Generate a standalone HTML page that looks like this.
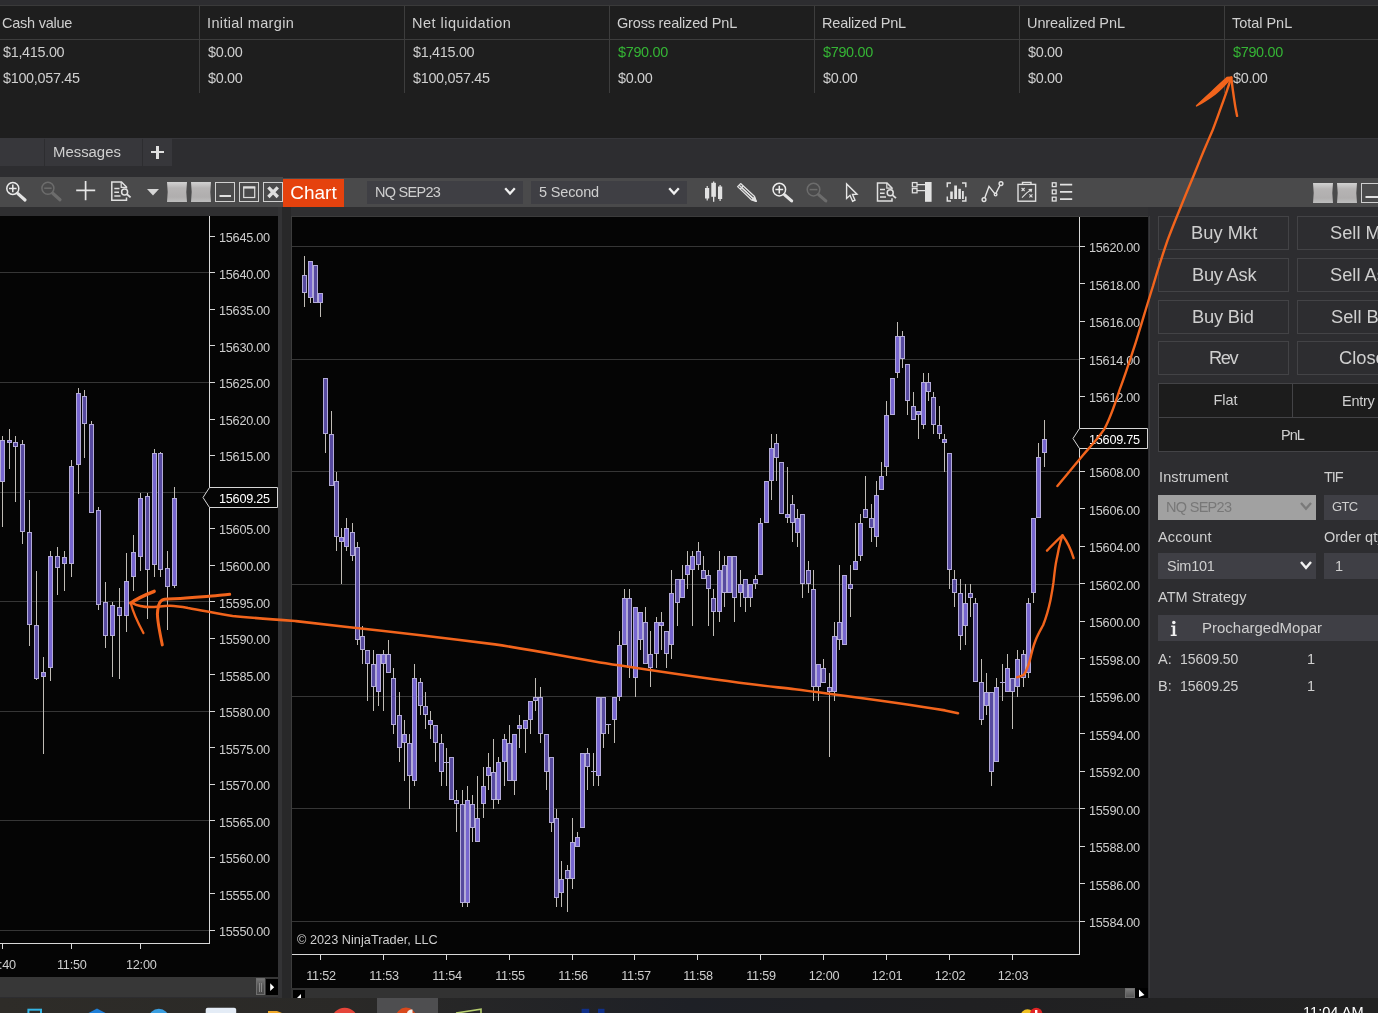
<!DOCTYPE html>
<html><head><meta charset="utf-8"><title>NinjaTrader</title>
<style>
html,body{margin:0;padding:0;background:#2d2d30;}
body{width:1378px;height:1013px;overflow:hidden;position:relative;font-family:"Liberation Sans",sans-serif;}
#root{position:absolute;left:0;top:0;width:1378px;height:1013px;overflow:hidden;}
#root div,#root svg{position:absolute;}
#root div.t{will-change:transform;}
</style></head><body><div id="root">
<div style="left:0px;top:0px;width:1378px;height:1013px;background:#2d2d30;"></div>
<div style="left:0px;top:0px;width:1378px;height:5px;background:#2d2d30;"></div>
<div style="left:0px;top:5px;width:1378px;height:133px;background:#1e1e1e;"></div>
<div style="left:0px;top:5px;width:1378px;height:1px;background:#3a3a3a;"></div>
<div style="left:0px;top:39px;width:1378px;height:1px;background:#3d3d3d;"></div>
<div style="left:199px;top:6px;width:1px;height:87px;background:#3d3d3d;"></div>
<div style="left:404px;top:6px;width:1px;height:87px;background:#3d3d3d;"></div>
<div style="left:609px;top:6px;width:1px;height:87px;background:#3d3d3d;"></div>
<div style="left:814px;top:6px;width:1px;height:87px;background:#3d3d3d;"></div>
<div style="left:1019px;top:6px;width:1px;height:87px;background:#3d3d3d;"></div>
<div style="left:1224px;top:6px;width:1px;height:87px;background:#3d3d3d;"></div>
<div class="t" style="left:2px;top:10.8px;height:24px;line-height:24px;font-size:14.5px;color:#cfcfcf;white-space:nowrap;letter-spacing:-0.25px;">Cash value</div>
<div class="t" style="left:207px;top:10.8px;height:24px;line-height:24px;font-size:14.5px;color:#cfcfcf;white-space:nowrap;letter-spacing:0.36px;">Initial margin</div>
<div class="t" style="left:412px;top:10.8px;height:24px;line-height:24px;font-size:14.5px;color:#cfcfcf;white-space:nowrap;letter-spacing:0.5px;">Net liquidation</div>
<div class="t" style="left:617px;top:10.8px;height:24px;line-height:24px;font-size:14.5px;color:#cfcfcf;white-space:nowrap;letter-spacing:-0.18px;">Gross realized PnL</div>
<div class="t" style="left:822px;top:10.8px;height:24px;line-height:24px;font-size:14.5px;color:#cfcfcf;white-space:nowrap;letter-spacing:-0.19px;">Realized PnL</div>
<div class="t" style="left:1027px;top:10.8px;height:24px;line-height:24px;font-size:14.5px;color:#cfcfcf;white-space:nowrap;letter-spacing:-0.09px;">Unrealized PnL</div>
<div class="t" style="left:1232px;top:10.8px;height:24px;line-height:24px;font-size:14.5px;color:#cfcfcf;white-space:nowrap;letter-spacing:-0.03px;">Total PnL</div>
<div class="t" style="left:3px;top:40.3px;height:24px;line-height:24px;font-size:14.4px;color:#cfcfcf;white-space:nowrap;letter-spacing:-0.3px;">$1,415.00</div>
<div class="t" style="left:208px;top:40.3px;height:24px;line-height:24px;font-size:14.4px;color:#cfcfcf;white-space:nowrap;letter-spacing:-0.3px;">$0.00</div>
<div class="t" style="left:413px;top:40.3px;height:24px;line-height:24px;font-size:14.4px;color:#cfcfcf;white-space:nowrap;letter-spacing:-0.3px;">$1,415.00</div>
<div class="t" style="left:618px;top:40.3px;height:24px;line-height:24px;font-size:14.4px;color:#35b535;white-space:nowrap;letter-spacing:-0.3px;">$790.00</div>
<div class="t" style="left:823px;top:40.3px;height:24px;line-height:24px;font-size:14.4px;color:#35b535;white-space:nowrap;letter-spacing:-0.3px;">$790.00</div>
<div class="t" style="left:1028px;top:40.3px;height:24px;line-height:24px;font-size:14.4px;color:#cfcfcf;white-space:nowrap;letter-spacing:-0.3px;">$0.00</div>
<div class="t" style="left:1233px;top:40.3px;height:24px;line-height:24px;font-size:14.4px;color:#35b535;white-space:nowrap;letter-spacing:-0.3px;">$790.00</div>
<div class="t" style="left:3px;top:66.3px;height:24px;line-height:24px;font-size:14.4px;color:#cfcfcf;white-space:nowrap;letter-spacing:-0.3px;">$100,057.45</div>
<div class="t" style="left:208px;top:66.3px;height:24px;line-height:24px;font-size:14.4px;color:#cfcfcf;white-space:nowrap;letter-spacing:-0.3px;">$0.00</div>
<div class="t" style="left:413px;top:66.3px;height:24px;line-height:24px;font-size:14.4px;color:#cfcfcf;white-space:nowrap;letter-spacing:-0.3px;">$100,057.45</div>
<div class="t" style="left:618px;top:66.3px;height:24px;line-height:24px;font-size:14.4px;color:#cfcfcf;white-space:nowrap;letter-spacing:-0.3px;">$0.00</div>
<div class="t" style="left:823px;top:66.3px;height:24px;line-height:24px;font-size:14.4px;color:#cfcfcf;white-space:nowrap;letter-spacing:-0.3px;">$0.00</div>
<div class="t" style="left:1028px;top:66.3px;height:24px;line-height:24px;font-size:14.4px;color:#cfcfcf;white-space:nowrap;letter-spacing:-0.3px;">$0.00</div>
<div class="t" style="left:1233px;top:66.3px;height:24px;line-height:24px;font-size:14.4px;color:#cfcfcf;white-space:nowrap;letter-spacing:-0.3px;">$0.00</div>
<div style="left:0px;top:138px;width:1378px;height:40px;background:#2d2d30;"></div>
<div style="left:0px;top:138px;width:1378px;height:1px;background:#36363a;"></div>
<div style="left:0px;top:138px;width:44px;height:28px;background:#37373b;"></div>
<div style="left:45px;top:138px;width:97px;height:28px;background:#37373b;"></div>
<div style="left:143px;top:138px;width:29px;height:28px;background:#37373b;"></div>
<div class="t" style="left:53px;top:139.5px;height:24px;line-height:24px;font-size:14.9px;color:#cfcfcf;white-space:nowrap;">Messages</div>
<div style="left:151px;top:151px;width:13px;height:2.4px;background:#e0e0e0;"></div>
<div style="left:156.3px;top:145.7px;width:2.4px;height:13px;background:#e0e0e0;"></div>
<div style="left:0px;top:177px;width:283px;height:30px;background:#4a4a4b;"></div>
<div style="left:283px;top:178px;width:1095px;height:29.4px;background:#4a4a4b;"></div>
<div style="left:0px;top:207px;width:1378px;height:10px;background:#2f2f31;"></div>
<div style="left:283px;top:179px;width:61px;height:28px;background:#e5420e;"></div>
<div class="t" style="left:283px;top:181.0px;height:24px;line-height:24px;font-size:19px;color:#ffffff;white-space:nowrap;width:61px;text-align:center;">Chart</div>
<div style="left:367px;top:181px;width:156px;height:23px;background:#3f3f44;"></div>
<div class="t" style="left:374.5px;top:179.8px;height:24px;line-height:24px;font-size:14.5px;color:#cfcfcf;white-space:nowrap;letter-spacing:-0.72px;">NQ SEP23</div>
<div style="left:531px;top:181px;width:156px;height:23px;background:#3f3f44;"></div>
<div class="t" style="left:539px;top:179.8px;height:24px;line-height:24px;font-size:14.5px;color:#cfcfcf;white-space:nowrap;letter-spacing:-0.16px;">5 Second</div>
<svg style="left:0;top:0" width="1378" height="260" viewBox="0 0 1378 260" fill="none">
<defs>
<linearGradient id="sq" x1="0" y1="0" x2="0" y2="1"><stop offset="0" stop-color="#d2d2d2"/><stop offset="0.3" stop-color="#b6b4b4"/><stop offset="0.75" stop-color="#b0aeae"/><stop offset="1" stop-color="#bebebe"/></linearGradient>
</defs>
<!-- left toolbar: zoom in -->
<g stroke="#ececec" stroke-width="1.5">
<circle cx="12.8" cy="188.4" r="6"/>
<path d="M9 188.4 H16.6 M12.8 184.6 V192.2"/>
<path d="M17.6 193.4 L25 200" stroke-width="3.2" stroke-linecap="round" stroke="#e4e4e4"/>
</g>
<!-- zoom out disabled -->
<g stroke="#6c6c6c" stroke-width="1.5">
<circle cx="47.9" cy="188.2" r="6"/>
<path d="M44.2 188.2 H51.6"/>
<path d="M52.7 193.2 L60 199.8" stroke-width="3.2" stroke-linecap="round"/>
</g>
<!-- crosshair plus -->
<path d="M76.2 190.4 H95.2 M85.6 181 V200.2" stroke="#e6e6e6" stroke-width="1.7"/>
<!-- document + magnifier -->
<g stroke="#e0e0e0" stroke-width="1.5">
<path d="M126.5 188.4 V187 L121.5 182 H111.8 V200.2 H126.5 V197.4"/>
<path d="M121.2 182 V187.3 H126.5" stroke-width="1.2"/>
<path d="M114.3 188.5 H119.5 M114.3 192.3 H119 M114.3 196 H120.5"/>
<circle cx="124.6" cy="191.9" r="3"/>
<path d="M126.9 194.2 L130.6 197.4" stroke-width="1.8"/>
</g>
<!-- dropdown triangle -->
<path d="M147 189 H159 L153 195.6 Z" fill="#d6d6d6"/>
<!-- gray squares -->
<path d="M167 182 H187 Q185.6 192 187 202 H167 Q168.4 192 167 182 Z" fill="url(#sq)"/>
<path d="M191 182 H211 Q209.6 192 211 202 H191 Q192.4 192 191 182 Z" fill="url(#sq)"/>
<!-- window buttons -->
<g stroke="#cfcfcf" stroke-width="1">
<rect x="215.5" y="182.5" width="19" height="19" fill="#4a4a4b"/>
<rect x="239.5" y="182.5" width="19" height="19" fill="#4a4a4b"/>
<rect x="263.5" y="182.5" width="19" height="19" fill="#4a4a4b"/>
</g>
<path d="M219.5 196 H231" stroke="#e0e0e0" stroke-width="2"/>
<rect x="243.7" y="187" width="11" height="10.5" stroke="#dcdcdc" stroke-width="1.2"/>
<path d="M243.2 187.6 H255.2" stroke="#dcdcdc" stroke-width="2"/>
<path d="M268.4 187.4 L277.8 197 M277.8 187.4 L268.4 197" stroke="#dedede" stroke-width="3.3"/>

<!-- selector chevrons -->
<path d="M505.2 188.3 L510 193.6 L514.8 188.3" stroke="#f0f0f0" stroke-width="2.3"/>
<path d="M669.2 188.3 L674 193.6 L678.8 188.3" stroke="#f0f0f0" stroke-width="2.3"/>

<!-- a. candlestick icon -->
<g fill="#e2e2e2">
<rect x="705" y="188" width="4.2" height="10.5"/>
<rect x="706.6" y="186" width="1.2" height="14.5"/>
<rect x="711.3" y="182.8" width="4.6" height="14"/>
<rect x="713" y="181.5" width="1.3" height="20.3"/>
<rect x="718" y="186.5" width="4.2" height="12.5"/>
<rect x="719.5" y="185" width="1.2" height="16"/>
</g>
<!-- b. pencil -->
<g stroke="#e2e2e2" stroke-width="1.3" stroke-linejoin="round">
<path d="M737.6 186.6 L740.6 183.6 L754.6 196.6 L756.2 201.4 L751.4 199.8 Z"/>
<path d="M739.2 185.2 L753 198.3 M740.2 189 L743.2 186"/>
<path d="M752.2 199.2 L756.2 201.4 L754.3 197.4 Z" fill="#e2e2e2"/>
<path d="M741.5 187.6 L752.6 198"/>
</g>
<!-- c. zoom in -->
<g stroke="#ececec" stroke-width="1.5">
<circle cx="779.3" cy="189.6" r="6.3"/>
<path d="M775.4 189.6 H783.2 M779.3 185.7 V193.5"/>
<path d="M784.4 194.6 L791.6 200.9" stroke-width="3.2" stroke-linecap="round" stroke="#e4e4e4"/>
</g>
<!-- d. zoom out disabled -->
<g stroke="#6c6c6c" stroke-width="1.5">
<circle cx="813.5" cy="189.6" r="6.3"/>
<path d="M809.6 189.6 H817.4"/>
<path d="M818.6 194.6 L825.8 200.9" stroke-width="3.2" stroke-linecap="round"/>
</g>
<!-- e. cursor -->
<path d="M846.6 184 L846.6 198.4 L850 195.3 L852.6 201.2 L855 200.1 L852.5 194.5 L857 194.2 Z" stroke="#e6e6e6" stroke-width="1.4" stroke-linejoin="miter"/>
<!-- f. doc + magnifier -->
<g stroke="#e0e0e0" stroke-width="1.5">
<path d="M892 189.4 V188 L887 183 H877.5 V201 H892 V198.2"/>
<path d="M886.8 183 V188.2 H892" stroke-width="1.2"/>
<path d="M880 189.4 H885 M880 193.2 H884.6 M880 197 H886"/>
<circle cx="890.2" cy="192.8" r="3"/>
<path d="M892.5 195.1 L896 198.2" stroke-width="1.8"/>
</g>
<!-- g. levels icon -->
<g stroke="#e0e0e0" stroke-width="1.3">
<rect x="912.4" y="182.6" width="4.6" height="4.2"/>
<rect x="912.4" y="188.6" width="4.6" height="4.2"/>
<path d="M917 184.7 H925 M917 190.7 H925"/>
</g>
<rect x="925" y="182" width="6.6" height="19.8" fill="#e2e2e2"/>
<!-- h. bars in brackets -->
<g stroke="#e0e0e0" stroke-width="1.5">
<path d="M951 183 H947.3 V187.2 M947.3 196.6 V200.9 H951 M962 183 H965.8 V187.2 M965.8 196.6 V200.9 H962"/>
</g>
<g fill="#e2e2e2">
<rect x="950.2" y="191.5" width="2.6" height="7.5"/>
<rect x="954.2" y="185.5" width="2.8" height="13.5"/>
<rect x="958.3" y="188.8" width="2.6" height="10.2"/>
<rect x="962" y="191" width="1.8" height="8"/>
</g>
<!-- i. polyline nodes -->
<g stroke="#e2e2e2" stroke-width="1.4">
<path d="M984.6 198.2 L989 186.4 L995.4 194.4 L1000.2 184.8"/>
<circle cx="984" cy="199.6" r="1.9" fill="#4a4a4b"/>
<circle cx="1001" cy="183.6" r="1.9" fill="#4a4a4b"/>
<circle cx="995.6" cy="194.6" r="1.3" fill="#4a4a4b"/>
</g>
<!-- j. clipboard strategy -->
<g stroke="#e0e0e0" stroke-width="1.4">
<rect x="1018" y="184.4" width="17.6" height="16.8"/>
<path d="M1022.5 184.4 V182.4 H1031 V184.4"/>
<path d="M1021.6 188 L1024.6 191 M1024.6 188 L1021.6 191 M1029.4 194.4 L1032.4 197.4 M1032.4 194.4 L1029.4 197.4" stroke-width="1.1"/>
<path d="M1022 197.6 L1027 192.6 L1031 190 M1028.6 189.6 L1031.6 189.4 L1031 192.2" stroke-width="1.1"/>
</g>
<!-- k. list icon -->
<g stroke="#e2e2e2" stroke-width="1.3">
<rect x="1052.3" y="182.8" width="3.8" height="3.8"/>
<rect x="1052.3" y="190" width="3.8" height="3.8"/>
<rect x="1052.3" y="197.2" width="3.8" height="3.8"/>
<path d="M1060 184.7 H1072.2 M1060 191.9 H1072.2 M1060 199.1 H1072.2" stroke-width="1.8"/>
</g>
<!-- right squares -->
<path d="M1313 183 H1333 Q1331.6 193 1333 203 H1313 Q1314.4 193 1313 183 Z" fill="url(#sq)"/>
<path d="M1337 183 H1357 Q1355.6 193 1357 203 H1337 Q1338.4 193 1337 183 Z" fill="url(#sq)"/>
<rect x="1361.5" y="183.5" width="19" height="19" fill="#4a4a4b" stroke="#cfcfcf"/>
<path d="M1365.5 197 H1378" stroke="#e0e0e0" stroke-width="2"/>
</svg>

<div style="left:0px;top:216px;width:278px;height:762px;background:#050505;"></div>
<div style="left:278px;top:207px;width:4px;height:791px;background:#333335;"></div>
<div style="left:282px;top:207px;width:9px;height:791px;background:#282829;"></div>
<div style="left:0px;top:977px;width:278px;height:20px;background:#373737;"></div>
<div style="left:255.5px;top:978.3px;width:9.5px;height:17.2px;background:linear-gradient(#767676,#555555 45%,#484848);border:1px solid #6e6e6e;box-sizing:border-box;"></div>
<div style="left:259px;top:983px;width:1px;height:9px;background:#8a8a8a;"></div>
<div style="left:261px;top:983px;width:1px;height:9px;background:#8a8a8a;"></div>
<div style="left:265.8px;top:978.8px;width:12.4px;height:16.4px;background:#000000;"></div>
<svg style="left:266px;top:979px" width="13" height="16"><path d="M4.2 4.3 L8.2 8.2 L4.2 12 Z" fill="#fff"/></svg>
<div style="left:291px;top:216px;width:857px;height:772px;background:#050505;border-left:1px solid #3c3c3c;border-top:1px solid #3c3c3c;box-sizing:border-box;"></div>
<div style="left:291px;top:988.4px;width:857px;height:10px;background:#323232;"></div>
<div style="left:293px;top:990px;width:11.6px;height:8px;background:#000;"></div>
<svg style="left:293px;top:990px" width="12" height="8"><path d="M8 8 V4 L4 8 Z" fill="#fff"/></svg>
<div style="left:1125px;top:988.4px;width:10px;height:10px;background:linear-gradient(#7a7a7a,#555);border:1px solid #6e6e6e;box-sizing:border-box;"></div>
<div style="left:1135px;top:988.4px;width:13px;height:10px;background:#000;"></div>
<svg style="left:1135px;top:988px" width="13" height="10"><path d="M4 1.5 L4 9 L9.5 7 Z" fill="#fff"/></svg>
<svg style="left:0;top:0" width="1378" height="1013" viewBox="0 0 1378 1013">
<g stroke="#363636" stroke-width="1" shape-rendering="crispEdges">
<line x1="0" y1="272.5" x2="209" y2="272.5"/>
<line x1="0" y1="382.5" x2="209" y2="382.5"/>
<line x1="0" y1="492.5" x2="209" y2="492.5"/>
<line x1="0" y1="601.5" x2="209" y2="601.5"/>
<line x1="0" y1="711.5" x2="209" y2="711.5"/>
<line x1="0" y1="820.5" x2="209" y2="820.5"/>
<line x1="0" y1="930.5" x2="209" y2="930.5"/>
<line x1="292" y1="246.5" x2="1080" y2="246.5"/>
<line x1="292" y1="359.5" x2="1080" y2="359.5"/>
<line x1="292" y1="471.5" x2="1080" y2="471.5"/>
<line x1="292" y1="584.5" x2="1080" y2="584.5"/>
<line x1="292" y1="696.5" x2="1080" y2="696.5"/>
<line x1="292" y1="808.5" x2="1080" y2="808.5"/>
<line x1="292" y1="921.5" x2="1080" y2="921.5"/>
</g>
<g stroke="#d8d8d8" stroke-width="1" shape-rendering="crispEdges">
<line x1="209.5" y1="216" x2="209.5" y2="944"/>
<line x1="0" y1="943.5" x2="210" y2="943.5"/>
<line x1="210" y1="236.5" x2="215" y2="236.5"/>
<line x1="210" y1="272.5" x2="215" y2="272.5"/>
<line x1="210" y1="309.5" x2="215" y2="309.5"/>
<line x1="210" y1="345.5" x2="215" y2="345.5"/>
<line x1="210" y1="382.5" x2="215" y2="382.5"/>
<line x1="210" y1="419.5" x2="215" y2="419.5"/>
<line x1="210" y1="455.5" x2="215" y2="455.5"/>
<line x1="210" y1="492.5" x2="215" y2="492.5"/>
<line x1="210" y1="528.5" x2="215" y2="528.5"/>
<line x1="210" y1="565.5" x2="215" y2="565.5"/>
<line x1="210" y1="601.5" x2="215" y2="601.5"/>
<line x1="210" y1="638.5" x2="215" y2="638.5"/>
<line x1="210" y1="674.5" x2="215" y2="674.5"/>
<line x1="210" y1="711.5" x2="215" y2="711.5"/>
<line x1="210" y1="747.5" x2="215" y2="747.5"/>
<line x1="210" y1="784.5" x2="215" y2="784.5"/>
<line x1="210" y1="820.5" x2="215" y2="820.5"/>
<line x1="210" y1="857.5" x2="215" y2="857.5"/>
<line x1="210" y1="893.5" x2="215" y2="893.5"/>
<line x1="210" y1="930.5" x2="215" y2="930.5"/>
<line x1="2.5" y1="944" x2="2.5" y2="949"/>
<line x1="71.5" y1="944" x2="71.5" y2="949"/>
<line x1="140.5" y1="944" x2="140.5" y2="949"/>
<line x1="1079.5" y1="217" x2="1079.5" y2="955"/>
<line x1="292" y1="954.5" x2="1080" y2="954.5"/>
<line x1="1080" y1="246.5" x2="1085" y2="246.5"/>
<line x1="1080" y1="283.5" x2="1085" y2="283.5"/>
<line x1="1080" y1="321.5" x2="1085" y2="321.5"/>
<line x1="1080" y1="358.5" x2="1085" y2="358.5"/>
<line x1="1080" y1="396.5" x2="1085" y2="396.5"/>
<line x1="1080" y1="433.5" x2="1085" y2="433.5"/>
<line x1="1080" y1="471.5" x2="1085" y2="471.5"/>
<line x1="1080" y1="508.5" x2="1085" y2="508.5"/>
<line x1="1080" y1="546.5" x2="1085" y2="546.5"/>
<line x1="1080" y1="583.5" x2="1085" y2="583.5"/>
<line x1="1080" y1="621.5" x2="1085" y2="621.5"/>
<line x1="1080" y1="658.5" x2="1085" y2="658.5"/>
<line x1="1080" y1="696.5" x2="1085" y2="696.5"/>
<line x1="1080" y1="733.5" x2="1085" y2="733.5"/>
<line x1="1080" y1="771.5" x2="1085" y2="771.5"/>
<line x1="1080" y1="808.5" x2="1085" y2="808.5"/>
<line x1="1080" y1="846.5" x2="1085" y2="846.5"/>
<line x1="1080" y1="883.5" x2="1085" y2="883.5"/>
<line x1="1080" y1="921.5" x2="1085" y2="921.5"/>
<line x1="320.5" y1="955" x2="320.5" y2="960"/>
<line x1="383.5" y1="955" x2="383.5" y2="960"/>
<line x1="446.5" y1="955" x2="446.5" y2="960"/>
<line x1="509.5" y1="955" x2="509.5" y2="960"/>
<line x1="572.5" y1="955" x2="572.5" y2="960"/>
<line x1="634.5" y1="955" x2="634.5" y2="960"/>
<line x1="697.5" y1="955" x2="697.5" y2="960"/>
<line x1="760.5" y1="955" x2="760.5" y2="960"/>
<line x1="823.5" y1="955" x2="823.5" y2="960"/>
<line x1="886.5" y1="955" x2="886.5" y2="960"/>
<line x1="949.5" y1="955" x2="949.5" y2="960"/>
<line x1="1012.5" y1="955" x2="1012.5" y2="960"/>
</g>
<g stroke="#c0bcb6" stroke-width="1" shape-rendering="crispEdges">
<line x1="2.5" y1="436.3" x2="2.5" y2="440.2"/>
<line x1="2.5" y1="481.7" x2="2.5" y2="527.0"/>
<rect x="0.5" y="440.7" width="4.0" height="40.5" fill="#7766cf" stroke="#b3abd8" stroke-width="1"/>
<line x1="9.5" y1="429.0" x2="9.5" y2="440.2"/>
<line x1="9.5" y1="442.8" x2="9.5" y2="468.8"/>
<rect x="7.5" y="440.7" width="4.0" height="1.6" fill="#7766cf" stroke="#b3abd8" stroke-width="1"/>
<line x1="15.5" y1="436.3" x2="15.5" y2="442.2"/>
<line x1="15.5" y1="446.7" x2="15.5" y2="502.0"/>
<rect x="13.5" y="442.7" width="4.0" height="3.5" fill="#574a9f" stroke="#b3abd8" stroke-width="1"/>
<line x1="22.5" y1="440.2" x2="22.5" y2="444.2"/>
<line x1="22.5" y1="532.4" x2="22.5" y2="543.9"/>
<rect x="20.5" y="444.7" width="4.0" height="87.2" fill="#574a9f" stroke="#b3abd8" stroke-width="1"/>
<line x1="29.5" y1="500.0" x2="29.5" y2="532.4"/>
<line x1="29.5" y1="625.2" x2="29.5" y2="645.9"/>
<rect x="27.5" y="532.9" width="4.0" height="91.8" fill="#574a9f" stroke="#b3abd8" stroke-width="1"/>
<line x1="36.5" y1="571.0" x2="36.5" y2="625.2"/>
<line x1="36.5" y1="678.9" x2="36.5" y2="680.4"/>
<rect x="34.5" y="625.7" width="4.0" height="52.7" fill="#574a9f" stroke="#b3abd8" stroke-width="1"/>
<line x1="43.5" y1="657.1" x2="43.5" y2="671.6"/>
<line x1="43.5" y1="676.5" x2="43.5" y2="753.9"/>
<rect x="41.5" y="672.1" width="4.0" height="3.9" fill="#7766cf" stroke="#b3abd8" stroke-width="1"/>
<line x1="50.5" y1="551.4" x2="50.5" y2="556.1"/>
<line x1="50.5" y1="667.6" x2="50.5" y2="680.8"/>
<rect x="48.5" y="556.6" width="4.0" height="110.5" fill="#7766cf" stroke="#b3abd8" stroke-width="1"/>
<line x1="57.5" y1="547.4" x2="57.5" y2="556.1"/>
<line x1="57.5" y1="567.5" x2="57.5" y2="595.1"/>
<rect x="55.5" y="556.6" width="4.0" height="10.4" fill="#574a9f" stroke="#b3abd8" stroke-width="1"/>
<line x1="64.5" y1="551.4" x2="64.5" y2="557.3"/>
<line x1="64.5" y1="563.6" x2="64.5" y2="591.2"/>
<rect x="62.5" y="557.8" width="4.0" height="5.3" fill="#7766cf" stroke="#b3abd8" stroke-width="1"/>
<line x1="71.5" y1="460.0" x2="71.5" y2="466.3"/>
<line x1="71.5" y1="563.6" x2="71.5" y2="576.8"/>
<rect x="69.5" y="466.8" width="4.0" height="96.3" fill="#7766cf" stroke="#b3abd8" stroke-width="1"/>
<line x1="78.5" y1="388.3" x2="78.5" y2="393.4"/>
<line x1="78.5" y1="464.5" x2="78.5" y2="493.9"/>
<rect x="76.5" y="393.9" width="4.0" height="70.1" fill="#7766cf" stroke="#b3abd8" stroke-width="1"/>
<line x1="84.5" y1="389.9" x2="84.5" y2="396.2"/>
<line x1="84.5" y1="424.4" x2="84.5" y2="458.0"/>
<rect x="82.5" y="396.7" width="4.0" height="27.2" fill="#574a9f" stroke="#b3abd8" stroke-width="1"/>
<line x1="91.5" y1="421.0" x2="91.5" y2="424.4"/>
<rect x="89.5" y="424.9" width="4.0" height="87.3" fill="#574a9f" stroke="#b3abd8" stroke-width="1"/>
<line x1="98.5" y1="507.3" x2="98.5" y2="510.3"/>
<line x1="98.5" y1="605.4" x2="98.5" y2="609.8"/>
<rect x="96.5" y="510.8" width="4.0" height="94.1" fill="#574a9f" stroke="#b3abd8" stroke-width="1"/>
<line x1="105.5" y1="582.1" x2="105.5" y2="601.5"/>
<line x1="105.5" y1="636.0" x2="105.5" y2="647.9"/>
<rect x="103.5" y="602.0" width="4.0" height="33.5" fill="#574a9f" stroke="#b3abd8" stroke-width="1"/>
<line x1="112.5" y1="601.9" x2="112.5" y2="605.4"/>
<line x1="112.5" y1="636.0" x2="112.5" y2="676.9"/>
<rect x="110.5" y="605.9" width="4.0" height="29.6" fill="#7766cf" stroke="#b3abd8" stroke-width="1"/>
<line x1="119.5" y1="588.0" x2="119.5" y2="607.4"/>
<line x1="119.5" y1="616.3" x2="119.5" y2="678.9"/>
<rect x="117.5" y="607.9" width="4.0" height="7.9" fill="#574a9f" stroke="#b3abd8" stroke-width="1"/>
<line x1="126.5" y1="553.3" x2="126.5" y2="581.3"/>
<line x1="126.5" y1="616.3" x2="126.5" y2="632.1"/>
<rect x="124.5" y="581.8" width="4.0" height="34.0" fill="#7766cf" stroke="#b3abd8" stroke-width="1"/>
<line x1="133.5" y1="535.0" x2="133.5" y2="552.2"/>
<line x1="133.5" y1="577.4" x2="133.5" y2="590.6"/>
<rect x="131.5" y="552.7" width="4.0" height="24.2" fill="#7766cf" stroke="#b3abd8" stroke-width="1"/>
<line x1="140.5" y1="493.0" x2="140.5" y2="497.5"/>
<line x1="140.5" y1="556.7" x2="140.5" y2="571.0"/>
<rect x="138.5" y="498.0" width="4.0" height="58.2" fill="#7766cf" stroke="#b3abd8" stroke-width="1"/>
<line x1="147.5" y1="493.0" x2="147.5" y2="495.5"/>
<line x1="147.5" y1="570.0" x2="147.5" y2="618.8"/>
<rect x="145.5" y="496.0" width="4.0" height="73.5" fill="#574a9f" stroke="#b3abd8" stroke-width="1"/>
<line x1="154.5" y1="449.1" x2="154.5" y2="453.4"/>
<line x1="154.5" y1="565.3" x2="154.5" y2="576.9"/>
<rect x="152.5" y="453.9" width="4.0" height="110.9" fill="#7766cf" stroke="#b3abd8" stroke-width="1"/>
<line x1="160.5" y1="452.0" x2="160.5" y2="453.4"/>
<line x1="160.5" y1="570.2" x2="160.5" y2="576.9"/>
<rect x="158.5" y="453.9" width="4.0" height="115.8" fill="#574a9f" stroke="#b3abd8" stroke-width="1"/>
<line x1="167.5" y1="551.4" x2="167.5" y2="567.5"/>
<line x1="167.5" y1="587.2" x2="167.5" y2="629.5"/>
<rect x="165.5" y="568.0" width="4.0" height="18.7" fill="#574a9f" stroke="#b3abd8" stroke-width="1"/>
<line x1="174.5" y1="487.0" x2="174.5" y2="497.5"/>
<line x1="174.5" y1="585.7" x2="174.5" y2="587.6"/>
<rect x="172.5" y="498.0" width="4.0" height="87.2" fill="#7766cf" stroke="#b3abd8" stroke-width="1"/>
<line x1="304.5" y1="255.9" x2="304.5" y2="274.6"/>
<line x1="304.5" y1="293.4" x2="304.5" y2="307.4"/>
<rect x="302.5" y="275.1" width="4.0" height="17.8" fill="#574a9f" stroke="#b3abd8" stroke-width="1"/>
<line x1="310.5" y1="298.1" x2="310.5" y2="302.8"/>
<rect x="308.5" y="261.1" width="4.0" height="36.5" fill="#7766cf" stroke="#b3abd8" stroke-width="1"/>
<rect x="313.5" y="265.8" width="4.0" height="36.5" fill="#574a9f" stroke="#b3abd8" stroke-width="1"/>
<line x1="320.5" y1="302.8" x2="320.5" y2="316.8"/>
<rect x="318.5" y="293.9" width="4.0" height="8.4" fill="#7766cf" stroke="#b3abd8" stroke-width="1"/>
<line x1="325.5" y1="434.0" x2="325.5" y2="452.8"/>
<rect x="323.5" y="378.2" width="4.0" height="55.2" fill="#574a9f" stroke="#b3abd8" stroke-width="1"/>
<line x1="331.5" y1="410.6" x2="331.5" y2="434.0"/>
<rect x="329.5" y="434.5" width="4.0" height="50.6" fill="#574a9f" stroke="#b3abd8" stroke-width="1"/>
<line x1="336.5" y1="471.5" x2="336.5" y2="480.9"/>
<line x1="336.5" y1="537.1" x2="336.5" y2="551.2"/>
<rect x="334.5" y="481.4" width="4.0" height="55.2" fill="#574a9f" stroke="#b3abd8" stroke-width="1"/>
<line x1="341.5" y1="527.8" x2="341.5" y2="537.1"/>
<line x1="341.5" y1="541.8" x2="341.5" y2="584.0"/>
<rect x="339.5" y="537.6" width="4.0" height="3.7" fill="#7766cf" stroke="#b3abd8" stroke-width="1"/>
<line x1="346.5" y1="518.4" x2="346.5" y2="527.8"/>
<line x1="346.5" y1="546.5" x2="346.5" y2="551.2"/>
<rect x="344.5" y="528.2" width="4.0" height="17.8" fill="#7766cf" stroke="#b3abd8" stroke-width="1"/>
<line x1="352.5" y1="523.1" x2="352.5" y2="532.4"/>
<line x1="352.5" y1="555.9" x2="352.5" y2="560.6"/>
<rect x="350.5" y="532.9" width="4.0" height="22.4" fill="#574a9f" stroke="#b3abd8" stroke-width="1"/>
<line x1="357.5" y1="541.8" x2="357.5" y2="546.5"/>
<line x1="357.5" y1="640.2" x2="357.5" y2="644.9"/>
<rect x="355.5" y="547.0" width="4.0" height="92.8" fill="#574a9f" stroke="#b3abd8" stroke-width="1"/>
<line x1="362.5" y1="626.2" x2="362.5" y2="635.6"/>
<line x1="362.5" y1="649.6" x2="362.5" y2="663.7"/>
<rect x="360.5" y="636.1" width="4.0" height="13.1" fill="#574a9f" stroke="#b3abd8" stroke-width="1"/>
<line x1="367.5" y1="663.7" x2="367.5" y2="701.2"/>
<rect x="365.5" y="650.1" width="4.0" height="13.1" fill="#574a9f" stroke="#b3abd8" stroke-width="1"/>
<line x1="373.5" y1="649.6" x2="373.5" y2="663.7"/>
<line x1="373.5" y1="687.1" x2="373.5" y2="710.6"/>
<rect x="371.5" y="664.2" width="4.0" height="22.4" fill="#574a9f" stroke="#b3abd8" stroke-width="1"/>
<line x1="378.5" y1="691.8" x2="378.5" y2="705.9"/>
<rect x="376.5" y="654.8" width="4.0" height="36.5" fill="#7766cf" stroke="#b3abd8" stroke-width="1"/>
<line x1="383.5" y1="649.6" x2="383.5" y2="654.3"/>
<line x1="383.5" y1="663.7" x2="383.5" y2="710.6"/>
<rect x="381.5" y="654.8" width="4.0" height="8.4" fill="#7766cf" stroke="#b3abd8" stroke-width="1"/>
<line x1="388.5" y1="640.2" x2="388.5" y2="654.3"/>
<rect x="386.5" y="654.8" width="4.0" height="17.8" fill="#574a9f" stroke="#b3abd8" stroke-width="1"/>
<line x1="393.5" y1="668.4" x2="393.5" y2="677.8"/>
<line x1="393.5" y1="724.6" x2="393.5" y2="734.0"/>
<rect x="391.5" y="678.2" width="4.0" height="45.9" fill="#574a9f" stroke="#b3abd8" stroke-width="1"/>
<line x1="399.5" y1="691.8" x2="399.5" y2="715.2"/>
<line x1="399.5" y1="748.1" x2="399.5" y2="762.1"/>
<rect x="397.5" y="715.8" width="4.0" height="31.8" fill="#574a9f" stroke="#b3abd8" stroke-width="1"/>
<line x1="404.5" y1="719.9" x2="404.5" y2="734.0"/>
<line x1="404.5" y1="743.4" x2="404.5" y2="780.9"/>
<rect x="402.5" y="734.5" width="4.0" height="8.4" fill="#7766cf" stroke="#b3abd8" stroke-width="1"/>
<line x1="409.5" y1="734.0" x2="409.5" y2="743.4"/>
<line x1="409.5" y1="776.2" x2="409.5" y2="809.0"/>
<rect x="407.5" y="743.9" width="4.0" height="31.8" fill="#574a9f" stroke="#b3abd8" stroke-width="1"/>
<line x1="414.5" y1="663.7" x2="414.5" y2="677.8"/>
<line x1="414.5" y1="780.9" x2="414.5" y2="785.6"/>
<rect x="412.5" y="678.2" width="4.0" height="102.1" fill="#7766cf" stroke="#b3abd8" stroke-width="1"/>
<line x1="420.5" y1="677.8" x2="420.5" y2="682.4"/>
<line x1="420.5" y1="705.9" x2="420.5" y2="715.2"/>
<rect x="418.5" y="682.9" width="4.0" height="22.4" fill="#574a9f" stroke="#b3abd8" stroke-width="1"/>
<line x1="425.5" y1="691.8" x2="425.5" y2="705.9"/>
<line x1="425.5" y1="715.2" x2="425.5" y2="729.3"/>
<rect x="423.5" y="706.4" width="4.0" height="8.4" fill="#574a9f" stroke="#b3abd8" stroke-width="1"/>
<line x1="430.5" y1="710.6" x2="430.5" y2="719.9"/>
<line x1="430.5" y1="724.6" x2="430.5" y2="738.7"/>
<rect x="428.5" y="720.4" width="4.0" height="3.7" fill="#7766cf" stroke="#b3abd8" stroke-width="1"/>
<line x1="435.5" y1="743.4" x2="435.5" y2="762.1"/>
<rect x="433.5" y="725.1" width="4.0" height="17.8" fill="#574a9f" stroke="#b3abd8" stroke-width="1"/>
<line x1="441.5" y1="734.0" x2="441.5" y2="743.4"/>
<line x1="441.5" y1="771.5" x2="441.5" y2="785.6"/>
<rect x="439.5" y="743.9" width="4.0" height="27.1" fill="#574a9f" stroke="#b3abd8" stroke-width="1"/>
<line x1="446.5" y1="748.1" x2="446.5" y2="762.1"/>
<line x1="446.5" y1="762.1" x2="446.5" y2="785.6"/>
<line x1="444.0" y1="762.1" x2="449.0" y2="762.1" stroke="#b3abd8"/>
<rect x="449.5" y="757.9" width="4.0" height="41.2" fill="#574a9f" stroke="#b3abd8" stroke-width="1"/>
<line x1="456.5" y1="790.2" x2="456.5" y2="799.6"/>
<line x1="456.5" y1="804.3" x2="456.5" y2="832.4"/>
<rect x="454.5" y="800.1" width="4.0" height="3.7" fill="#574a9f" stroke="#b3abd8" stroke-width="1"/>
<line x1="462.5" y1="790.2" x2="462.5" y2="804.3"/>
<line x1="462.5" y1="902.8" x2="462.5" y2="907.4"/>
<rect x="460.5" y="804.8" width="4.0" height="97.4" fill="#574a9f" stroke="#b3abd8" stroke-width="1"/>
<line x1="467.5" y1="785.6" x2="467.5" y2="799.6"/>
<line x1="467.5" y1="902.8" x2="467.5" y2="907.4"/>
<rect x="465.5" y="800.1" width="4.0" height="102.1" fill="#7766cf" stroke="#b3abd8" stroke-width="1"/>
<line x1="472.5" y1="794.9" x2="472.5" y2="804.3"/>
<line x1="472.5" y1="827.8" x2="472.5" y2="841.8"/>
<rect x="470.5" y="804.8" width="4.0" height="22.4" fill="#574a9f" stroke="#b3abd8" stroke-width="1"/>
<line x1="477.5" y1="776.2" x2="477.5" y2="818.4"/>
<rect x="475.5" y="818.9" width="4.0" height="22.4" fill="#7766cf" stroke="#b3abd8" stroke-width="1"/>
<line x1="483.5" y1="766.8" x2="483.5" y2="785.6"/>
<line x1="483.5" y1="804.3" x2="483.5" y2="818.4"/>
<rect x="481.5" y="786.1" width="4.0" height="17.8" fill="#7766cf" stroke="#b3abd8" stroke-width="1"/>
<line x1="488.5" y1="752.8" x2="488.5" y2="766.8"/>
<line x1="488.5" y1="776.2" x2="488.5" y2="790.2"/>
<rect x="486.5" y="767.3" width="4.0" height="8.4" fill="#7766cf" stroke="#b3abd8" stroke-width="1"/>
<line x1="493.5" y1="738.7" x2="493.5" y2="771.5"/>
<line x1="493.5" y1="799.6" x2="493.5" y2="809.0"/>
<rect x="491.5" y="772.0" width="4.0" height="27.1" fill="#574a9f" stroke="#b3abd8" stroke-width="1"/>
<line x1="498.5" y1="757.4" x2="498.5" y2="762.1"/>
<line x1="498.5" y1="799.6" x2="498.5" y2="804.3"/>
<rect x="496.5" y="762.6" width="4.0" height="36.5" fill="#7766cf" stroke="#b3abd8" stroke-width="1"/>
<line x1="504.5" y1="734.0" x2="504.5" y2="738.7"/>
<line x1="504.5" y1="762.1" x2="504.5" y2="785.6"/>
<rect x="502.5" y="739.2" width="4.0" height="22.4" fill="#7766cf" stroke="#b3abd8" stroke-width="1"/>
<line x1="509.5" y1="724.6" x2="509.5" y2="743.4"/>
<rect x="507.5" y="743.9" width="4.0" height="36.5" fill="#574a9f" stroke="#b3abd8" stroke-width="1"/>
<line x1="514.5" y1="780.9" x2="514.5" y2="794.9"/>
<rect x="512.5" y="734.5" width="4.0" height="45.9" fill="#7766cf" stroke="#b3abd8" stroke-width="1"/>
<line x1="519.5" y1="715.2" x2="519.5" y2="724.6"/>
<line x1="519.5" y1="729.3" x2="519.5" y2="748.1"/>
<rect x="517.5" y="725.1" width="4.0" height="3.7" fill="#7766cf" stroke="#b3abd8" stroke-width="1"/>
<line x1="525.5" y1="729.3" x2="525.5" y2="752.8"/>
<rect x="523.5" y="720.4" width="4.0" height="8.4" fill="#7766cf" stroke="#b3abd8" stroke-width="1"/>
<line x1="530.5" y1="719.9" x2="530.5" y2="734.0"/>
<rect x="528.5" y="701.7" width="4.0" height="17.8" fill="#7766cf" stroke="#b3abd8" stroke-width="1"/>
<line x1="535.5" y1="677.8" x2="535.5" y2="696.5"/>
<line x1="535.5" y1="701.2" x2="535.5" y2="710.6"/>
<rect x="533.5" y="697.0" width="4.0" height="3.7" fill="#574a9f" stroke="#b3abd8" stroke-width="1"/>
<line x1="540.5" y1="687.1" x2="540.5" y2="696.5"/>
<line x1="540.5" y1="734.0" x2="540.5" y2="743.4"/>
<rect x="538.5" y="697.0" width="4.0" height="36.5" fill="#574a9f" stroke="#b3abd8" stroke-width="1"/>
<line x1="546.5" y1="771.5" x2="546.5" y2="790.2"/>
<rect x="544.5" y="734.5" width="4.0" height="36.5" fill="#574a9f" stroke="#b3abd8" stroke-width="1"/>
<line x1="551.5" y1="823.1" x2="551.5" y2="832.4"/>
<rect x="549.5" y="757.9" width="4.0" height="64.6" fill="#574a9f" stroke="#b3abd8" stroke-width="1"/>
<line x1="556.5" y1="809.0" x2="556.5" y2="818.4"/>
<line x1="556.5" y1="898.1" x2="556.5" y2="907.4"/>
<rect x="554.5" y="818.9" width="4.0" height="78.7" fill="#574a9f" stroke="#b3abd8" stroke-width="1"/>
<line x1="561.5" y1="860.6" x2="561.5" y2="879.3"/>
<line x1="561.5" y1="893.4" x2="561.5" y2="907.4"/>
<rect x="559.5" y="879.8" width="4.0" height="13.1" fill="#7766cf" stroke="#b3abd8" stroke-width="1"/>
<line x1="567.5" y1="865.2" x2="567.5" y2="869.9"/>
<line x1="567.5" y1="879.3" x2="567.5" y2="912.1"/>
<rect x="565.5" y="870.4" width="4.0" height="8.4" fill="#574a9f" stroke="#b3abd8" stroke-width="1"/>
<line x1="572.5" y1="818.4" x2="572.5" y2="841.8"/>
<line x1="572.5" y1="879.3" x2="572.5" y2="888.7"/>
<rect x="570.5" y="842.3" width="4.0" height="36.5" fill="#7766cf" stroke="#b3abd8" stroke-width="1"/>
<line x1="577.5" y1="832.4" x2="577.5" y2="837.1"/>
<rect x="575.5" y="837.6" width="4.0" height="8.4" fill="#7766cf" stroke="#b3abd8" stroke-width="1"/>
<rect x="580.5" y="753.2" width="4.0" height="74.0" fill="#7766cf" stroke="#b3abd8" stroke-width="1"/>
<line x1="587.5" y1="748.1" x2="587.5" y2="752.8"/>
<line x1="587.5" y1="766.8" x2="587.5" y2="790.2"/>
<rect x="585.5" y="753.2" width="4.0" height="13.1" fill="#574a9f" stroke="#b3abd8" stroke-width="1"/>
<line x1="593.5" y1="752.8" x2="593.5" y2="771.5"/>
<line x1="593.5" y1="771.5" x2="593.5" y2="785.6"/>
<line x1="591.0" y1="771.5" x2="596.0" y2="771.5" stroke="#b3abd8"/>
<line x1="598.5" y1="776.2" x2="598.5" y2="785.6"/>
<rect x="596.5" y="697.0" width="4.0" height="78.7" fill="#7766cf" stroke="#b3abd8" stroke-width="1"/>
<line x1="603.5" y1="734.0" x2="603.5" y2="748.1"/>
<rect x="601.5" y="697.0" width="4.0" height="36.5" fill="#574a9f" stroke="#b3abd8" stroke-width="1"/>
<line x1="608.5" y1="724.6" x2="608.5" y2="734.0"/>
<line x1="606.0" y1="724.6" x2="611.0" y2="724.6" stroke="#b3abd8"/>
<line x1="614.5" y1="719.9" x2="614.5" y2="743.4"/>
<rect x="612.5" y="697.0" width="4.0" height="22.4" fill="#7766cf" stroke="#b3abd8" stroke-width="1"/>
<line x1="619.5" y1="630.9" x2="619.5" y2="644.9"/>
<line x1="619.5" y1="696.5" x2="619.5" y2="701.2"/>
<rect x="617.5" y="645.4" width="4.0" height="50.6" fill="#7766cf" stroke="#b3abd8" stroke-width="1"/>
<line x1="624.5" y1="588.7" x2="624.5" y2="598.1"/>
<rect x="622.5" y="598.6" width="4.0" height="45.9" fill="#7766cf" stroke="#b3abd8" stroke-width="1"/>
<line x1="629.5" y1="588.7" x2="629.5" y2="598.1"/>
<line x1="629.5" y1="668.4" x2="629.5" y2="677.8"/>
<rect x="627.5" y="598.6" width="4.0" height="69.3" fill="#574a9f" stroke="#b3abd8" stroke-width="1"/>
<line x1="635.5" y1="677.8" x2="635.5" y2="696.5"/>
<rect x="633.5" y="607.9" width="4.0" height="69.3" fill="#7766cf" stroke="#b3abd8" stroke-width="1"/>
<line x1="640.5" y1="640.2" x2="640.5" y2="649.6"/>
<rect x="638.5" y="612.6" width="4.0" height="27.1" fill="#7766cf" stroke="#b3abd8" stroke-width="1"/>
<line x1="645.5" y1="607.4" x2="645.5" y2="621.5"/>
<rect x="643.5" y="622.0" width="4.0" height="41.2" fill="#574a9f" stroke="#b3abd8" stroke-width="1"/>
<line x1="650.5" y1="630.9" x2="650.5" y2="654.3"/>
<line x1="650.5" y1="668.4" x2="650.5" y2="687.1"/>
<rect x="648.5" y="654.8" width="4.0" height="13.1" fill="#574a9f" stroke="#b3abd8" stroke-width="1"/>
<line x1="656.5" y1="616.8" x2="656.5" y2="621.5"/>
<line x1="656.5" y1="654.3" x2="656.5" y2="668.4"/>
<rect x="654.5" y="622.0" width="4.0" height="31.8" fill="#7766cf" stroke="#b3abd8" stroke-width="1"/>
<line x1="661.5" y1="612.1" x2="661.5" y2="621.5"/>
<line x1="661.5" y1="626.2" x2="661.5" y2="649.6"/>
<rect x="659.5" y="622.0" width="4.0" height="3.7" fill="#7766cf" stroke="#b3abd8" stroke-width="1"/>
<line x1="666.5" y1="654.3" x2="666.5" y2="668.4"/>
<rect x="664.5" y="631.4" width="4.0" height="22.4" fill="#574a9f" stroke="#b3abd8" stroke-width="1"/>
<line x1="671.5" y1="569.9" x2="671.5" y2="593.4"/>
<line x1="671.5" y1="644.9" x2="671.5" y2="659.0"/>
<rect x="669.5" y="593.9" width="4.0" height="50.6" fill="#7766cf" stroke="#b3abd8" stroke-width="1"/>
<line x1="677.5" y1="602.8" x2="677.5" y2="626.2"/>
<rect x="675.5" y="579.8" width="4.0" height="22.4" fill="#574a9f" stroke="#b3abd8" stroke-width="1"/>
<line x1="682.5" y1="565.2" x2="682.5" y2="579.3"/>
<rect x="680.5" y="579.8" width="4.0" height="17.8" fill="#7766cf" stroke="#b3abd8" stroke-width="1"/>
<line x1="687.5" y1="551.2" x2="687.5" y2="565.2"/>
<line x1="687.5" y1="574.6" x2="687.5" y2="588.7"/>
<rect x="685.5" y="565.8" width="4.0" height="8.4" fill="#7766cf" stroke="#b3abd8" stroke-width="1"/>
<line x1="692.5" y1="551.2" x2="692.5" y2="555.9"/>
<line x1="692.5" y1="569.9" x2="692.5" y2="626.2"/>
<rect x="690.5" y="556.4" width="4.0" height="13.1" fill="#7766cf" stroke="#b3abd8" stroke-width="1"/>
<line x1="698.5" y1="541.8" x2="698.5" y2="551.2"/>
<line x1="698.5" y1="565.2" x2="698.5" y2="569.9"/>
<rect x="696.5" y="551.7" width="4.0" height="13.1" fill="#574a9f" stroke="#b3abd8" stroke-width="1"/>
<line x1="703.5" y1="555.9" x2="703.5" y2="569.9"/>
<rect x="701.5" y="570.4" width="4.0" height="8.4" fill="#574a9f" stroke="#b3abd8" stroke-width="1"/>
<line x1="708.5" y1="569.9" x2="708.5" y2="574.6"/>
<line x1="708.5" y1="588.7" x2="708.5" y2="626.2"/>
<rect x="706.5" y="575.1" width="4.0" height="13.1" fill="#574a9f" stroke="#b3abd8" stroke-width="1"/>
<line x1="713.5" y1="588.7" x2="713.5" y2="598.1"/>
<line x1="713.5" y1="612.1" x2="713.5" y2="635.6"/>
<rect x="711.5" y="598.6" width="4.0" height="13.1" fill="#574a9f" stroke="#b3abd8" stroke-width="1"/>
<line x1="719.5" y1="551.2" x2="719.5" y2="569.9"/>
<line x1="719.5" y1="612.1" x2="719.5" y2="621.5"/>
<rect x="717.5" y="570.4" width="4.0" height="41.2" fill="#7766cf" stroke="#b3abd8" stroke-width="1"/>
<line x1="724.5" y1="555.9" x2="724.5" y2="565.2"/>
<line x1="724.5" y1="593.4" x2="724.5" y2="607.4"/>
<rect x="722.5" y="565.8" width="4.0" height="27.1" fill="#574a9f" stroke="#b3abd8" stroke-width="1"/>
<rect x="727.5" y="556.4" width="4.0" height="36.5" fill="#7766cf" stroke="#b3abd8" stroke-width="1"/>
<line x1="734.5" y1="598.1" x2="734.5" y2="621.5"/>
<rect x="732.5" y="556.4" width="4.0" height="41.2" fill="#574a9f" stroke="#b3abd8" stroke-width="1"/>
<line x1="740.5" y1="569.9" x2="740.5" y2="584.0"/>
<line x1="740.5" y1="593.4" x2="740.5" y2="607.4"/>
<rect x="738.5" y="584.5" width="4.0" height="8.4" fill="#7766cf" stroke="#b3abd8" stroke-width="1"/>
<line x1="745.5" y1="598.1" x2="745.5" y2="612.1"/>
<rect x="743.5" y="579.8" width="4.0" height="17.8" fill="#574a9f" stroke="#b3abd8" stroke-width="1"/>
<line x1="750.5" y1="598.1" x2="750.5" y2="607.4"/>
<rect x="748.5" y="584.5" width="4.0" height="13.1" fill="#7766cf" stroke="#b3abd8" stroke-width="1"/>
<line x1="755.5" y1="574.6" x2="755.5" y2="579.3"/>
<line x1="755.5" y1="584.0" x2="755.5" y2="588.7"/>
<rect x="753.5" y="579.8" width="4.0" height="3.7" fill="#574a9f" stroke="#b3abd8" stroke-width="1"/>
<line x1="760.5" y1="518.4" x2="760.5" y2="523.1"/>
<rect x="758.5" y="523.6" width="4.0" height="50.6" fill="#7766cf" stroke="#b3abd8" stroke-width="1"/>
<rect x="764.5" y="481.4" width="4.0" height="41.2" fill="#7766cf" stroke="#b3abd8" stroke-width="1"/>
<line x1="771.5" y1="434.0" x2="771.5" y2="448.1"/>
<line x1="771.5" y1="480.9" x2="771.5" y2="499.6"/>
<rect x="769.5" y="448.6" width="4.0" height="31.8" fill="#7766cf" stroke="#b3abd8" stroke-width="1"/>
<line x1="776.5" y1="434.0" x2="776.5" y2="443.4"/>
<line x1="776.5" y1="457.4" x2="776.5" y2="480.9"/>
<rect x="774.5" y="443.9" width="4.0" height="13.1" fill="#574a9f" stroke="#b3abd8" stroke-width="1"/>
<rect x="779.5" y="462.6" width="4.0" height="50.6" fill="#574a9f" stroke="#b3abd8" stroke-width="1"/>
<line x1="787.5" y1="466.8" x2="787.5" y2="513.7"/>
<line x1="787.5" y1="518.4" x2="787.5" y2="523.1"/>
<rect x="785.5" y="514.2" width="4.0" height="3.7" fill="#7766cf" stroke="#b3abd8" stroke-width="1"/>
<line x1="792.5" y1="494.9" x2="792.5" y2="504.3"/>
<line x1="792.5" y1="523.1" x2="792.5" y2="541.8"/>
<rect x="790.5" y="504.8" width="4.0" height="17.8" fill="#574a9f" stroke="#b3abd8" stroke-width="1"/>
<line x1="797.5" y1="509.0" x2="797.5" y2="518.4"/>
<line x1="797.5" y1="532.4" x2="797.5" y2="546.5"/>
<rect x="795.5" y="518.9" width="4.0" height="13.1" fill="#7766cf" stroke="#b3abd8" stroke-width="1"/>
<line x1="802.5" y1="584.0" x2="802.5" y2="598.1"/>
<rect x="800.5" y="514.2" width="4.0" height="69.3" fill="#574a9f" stroke="#b3abd8" stroke-width="1"/>
<line x1="808.5" y1="560.6" x2="808.5" y2="569.9"/>
<line x1="808.5" y1="584.0" x2="808.5" y2="593.4"/>
<rect x="806.5" y="570.4" width="4.0" height="13.1" fill="#574a9f" stroke="#b3abd8" stroke-width="1"/>
<line x1="813.5" y1="569.9" x2="813.5" y2="588.7"/>
<line x1="813.5" y1="687.1" x2="813.5" y2="701.2"/>
<rect x="811.5" y="589.2" width="4.0" height="97.4" fill="#574a9f" stroke="#b3abd8" stroke-width="1"/>
<line x1="818.5" y1="687.1" x2="818.5" y2="701.2"/>
<rect x="816.5" y="664.2" width="4.0" height="22.4" fill="#7766cf" stroke="#b3abd8" stroke-width="1"/>
<line x1="823.5" y1="659.0" x2="823.5" y2="668.4"/>
<rect x="821.5" y="668.9" width="4.0" height="13.1" fill="#574a9f" stroke="#b3abd8" stroke-width="1"/>
<line x1="829.5" y1="673.1" x2="829.5" y2="687.1"/>
<line x1="829.5" y1="691.8" x2="829.5" y2="757.4"/>
<rect x="827.5" y="687.6" width="4.0" height="3.7" fill="#574a9f" stroke="#b3abd8" stroke-width="1"/>
<line x1="834.5" y1="621.5" x2="834.5" y2="635.6"/>
<line x1="834.5" y1="691.8" x2="834.5" y2="701.2"/>
<rect x="832.5" y="636.1" width="4.0" height="55.2" fill="#7766cf" stroke="#b3abd8" stroke-width="1"/>
<line x1="839.5" y1="565.2" x2="839.5" y2="621.5"/>
<line x1="839.5" y1="640.2" x2="839.5" y2="649.6"/>
<rect x="837.5" y="622.0" width="4.0" height="17.8" fill="#574a9f" stroke="#b3abd8" stroke-width="1"/>
<rect x="842.5" y="575.1" width="4.0" height="69.3" fill="#7766cf" stroke="#b3abd8" stroke-width="1"/>
<line x1="850.5" y1="565.2" x2="850.5" y2="584.0"/>
<line x1="850.5" y1="588.7" x2="850.5" y2="616.8"/>
<rect x="848.5" y="584.5" width="4.0" height="3.7" fill="#574a9f" stroke="#b3abd8" stroke-width="1"/>
<line x1="855.5" y1="523.1" x2="855.5" y2="560.6"/>
<rect x="853.5" y="561.1" width="4.0" height="8.4" fill="#7766cf" stroke="#b3abd8" stroke-width="1"/>
<line x1="860.5" y1="513.7" x2="860.5" y2="523.1"/>
<line x1="860.5" y1="555.9" x2="860.5" y2="560.6"/>
<rect x="858.5" y="523.6" width="4.0" height="31.8" fill="#7766cf" stroke="#b3abd8" stroke-width="1"/>
<line x1="865.5" y1="476.2" x2="865.5" y2="509.0"/>
<rect x="863.5" y="509.5" width="4.0" height="8.4" fill="#574a9f" stroke="#b3abd8" stroke-width="1"/>
<line x1="871.5" y1="504.3" x2="871.5" y2="518.4"/>
<line x1="871.5" y1="527.8" x2="871.5" y2="541.8"/>
<rect x="869.5" y="518.9" width="4.0" height="8.4" fill="#574a9f" stroke="#b3abd8" stroke-width="1"/>
<line x1="876.5" y1="480.9" x2="876.5" y2="494.9"/>
<line x1="876.5" y1="537.1" x2="876.5" y2="546.5"/>
<rect x="874.5" y="495.4" width="4.0" height="41.2" fill="#7766cf" stroke="#b3abd8" stroke-width="1"/>
<line x1="881.5" y1="462.1" x2="881.5" y2="476.2"/>
<rect x="879.5" y="476.7" width="4.0" height="13.1" fill="#7766cf" stroke="#b3abd8" stroke-width="1"/>
<line x1="886.5" y1="401.2" x2="886.5" y2="415.2"/>
<line x1="886.5" y1="466.8" x2="886.5" y2="476.2"/>
<rect x="884.5" y="415.8" width="4.0" height="50.6" fill="#7766cf" stroke="#b3abd8" stroke-width="1"/>
<rect x="890.5" y="378.2" width="4.0" height="36.5" fill="#7766cf" stroke="#b3abd8" stroke-width="1"/>
<line x1="897.5" y1="321.5" x2="897.5" y2="335.6"/>
<line x1="897.5" y1="373.1" x2="897.5" y2="377.8"/>
<rect x="895.5" y="336.1" width="4.0" height="36.5" fill="#7766cf" stroke="#b3abd8" stroke-width="1"/>
<line x1="902.5" y1="330.9" x2="902.5" y2="335.6"/>
<line x1="902.5" y1="359.0" x2="902.5" y2="368.4"/>
<rect x="900.5" y="336.1" width="4.0" height="22.4" fill="#574a9f" stroke="#b3abd8" stroke-width="1"/>
<line x1="907.5" y1="401.2" x2="907.5" y2="415.2"/>
<rect x="905.5" y="364.2" width="4.0" height="36.5" fill="#574a9f" stroke="#b3abd8" stroke-width="1"/>
<line x1="913.5" y1="391.8" x2="913.5" y2="405.9"/>
<rect x="911.5" y="406.4" width="4.0" height="13.1" fill="#574a9f" stroke="#b3abd8" stroke-width="1"/>
<line x1="918.5" y1="415.2" x2="918.5" y2="438.7"/>
<rect x="916.5" y="411.1" width="4.0" height="3.7" fill="#7766cf" stroke="#b3abd8" stroke-width="1"/>
<line x1="923.5" y1="373.1" x2="923.5" y2="382.4"/>
<line x1="923.5" y1="424.6" x2="923.5" y2="429.3"/>
<rect x="921.5" y="382.9" width="4.0" height="41.2" fill="#7766cf" stroke="#b3abd8" stroke-width="1"/>
<line x1="928.5" y1="373.1" x2="928.5" y2="382.4"/>
<line x1="928.5" y1="391.8" x2="928.5" y2="401.2"/>
<rect x="926.5" y="382.9" width="4.0" height="8.4" fill="#574a9f" stroke="#b3abd8" stroke-width="1"/>
<line x1="933.5" y1="391.8" x2="933.5" y2="396.5"/>
<line x1="933.5" y1="424.6" x2="933.5" y2="434.0"/>
<rect x="931.5" y="397.0" width="4.0" height="27.1" fill="#574a9f" stroke="#b3abd8" stroke-width="1"/>
<line x1="939.5" y1="405.9" x2="939.5" y2="424.6"/>
<line x1="939.5" y1="434.0" x2="939.5" y2="438.7"/>
<rect x="937.5" y="425.1" width="4.0" height="8.4" fill="#574a9f" stroke="#b3abd8" stroke-width="1"/>
<line x1="944.5" y1="434.0" x2="944.5" y2="438.7"/>
<line x1="944.5" y1="443.4" x2="944.5" y2="471.5"/>
<rect x="942.5" y="439.2" width="4.0" height="3.7" fill="#7766cf" stroke="#b3abd8" stroke-width="1"/>
<line x1="949.5" y1="569.9" x2="949.5" y2="588.7"/>
<rect x="947.5" y="453.2" width="4.0" height="116.2" fill="#574a9f" stroke="#b3abd8" stroke-width="1"/>
<line x1="954.5" y1="569.9" x2="954.5" y2="579.3"/>
<line x1="954.5" y1="593.4" x2="954.5" y2="607.4"/>
<rect x="952.5" y="579.8" width="4.0" height="13.1" fill="#574a9f" stroke="#b3abd8" stroke-width="1"/>
<line x1="960.5" y1="579.3" x2="960.5" y2="593.4"/>
<line x1="960.5" y1="635.6" x2="960.5" y2="649.6"/>
<rect x="958.5" y="593.9" width="4.0" height="41.2" fill="#574a9f" stroke="#b3abd8" stroke-width="1"/>
<line x1="965.5" y1="584.0" x2="965.5" y2="602.8"/>
<line x1="965.5" y1="626.2" x2="965.5" y2="644.9"/>
<rect x="963.5" y="603.2" width="4.0" height="22.4" fill="#7766cf" stroke="#b3abd8" stroke-width="1"/>
<line x1="970.5" y1="584.0" x2="970.5" y2="593.4"/>
<line x1="970.5" y1="598.1" x2="970.5" y2="616.8"/>
<rect x="968.5" y="593.9" width="4.0" height="3.7" fill="#574a9f" stroke="#b3abd8" stroke-width="1"/>
<line x1="975.5" y1="598.1" x2="975.5" y2="602.8"/>
<rect x="973.5" y="603.2" width="4.0" height="78.7" fill="#574a9f" stroke="#b3abd8" stroke-width="1"/>
<line x1="981.5" y1="659.0" x2="981.5" y2="682.4"/>
<line x1="981.5" y1="719.9" x2="981.5" y2="724.6"/>
<rect x="979.5" y="682.9" width="4.0" height="36.5" fill="#574a9f" stroke="#b3abd8" stroke-width="1"/>
<line x1="986.5" y1="673.1" x2="986.5" y2="691.8"/>
<line x1="986.5" y1="705.9" x2="986.5" y2="715.2"/>
<rect x="984.5" y="692.3" width="4.0" height="13.1" fill="#7766cf" stroke="#b3abd8" stroke-width="1"/>
<line x1="991.5" y1="771.5" x2="991.5" y2="785.6"/>
<rect x="989.5" y="692.3" width="4.0" height="78.7" fill="#574a9f" stroke="#b3abd8" stroke-width="1"/>
<line x1="996.5" y1="677.8" x2="996.5" y2="687.1"/>
<rect x="994.5" y="687.6" width="4.0" height="74.0" fill="#7766cf" stroke="#b3abd8" stroke-width="1"/>
<line x1="1002.5" y1="663.7" x2="1002.5" y2="682.4"/>
<line x1="1002.5" y1="682.4" x2="1002.5" y2="701.2"/>
<line x1="1000.0" y1="682.4" x2="1005.0" y2="682.4" stroke="#b3abd8"/>
<line x1="1007.5" y1="654.3" x2="1007.5" y2="668.4"/>
<rect x="1005.5" y="668.9" width="4.0" height="22.4" fill="#7766cf" stroke="#b3abd8" stroke-width="1"/>
<line x1="1012.5" y1="691.8" x2="1012.5" y2="729.3"/>
<rect x="1010.5" y="678.2" width="4.0" height="13.1" fill="#574a9f" stroke="#b3abd8" stroke-width="1"/>
<line x1="1017.5" y1="649.6" x2="1017.5" y2="659.0"/>
<line x1="1017.5" y1="687.1" x2="1017.5" y2="696.5"/>
<rect x="1015.5" y="659.5" width="4.0" height="27.1" fill="#7766cf" stroke="#b3abd8" stroke-width="1"/>
<line x1="1023.5" y1="649.6" x2="1023.5" y2="654.3"/>
<line x1="1023.5" y1="677.8" x2="1023.5" y2="687.1"/>
<rect x="1021.5" y="654.8" width="4.0" height="22.4" fill="#574a9f" stroke="#b3abd8" stroke-width="1"/>
<line x1="1028.5" y1="598.1" x2="1028.5" y2="602.8"/>
<line x1="1028.5" y1="673.1" x2="1028.5" y2="677.8"/>
<rect x="1026.5" y="603.2" width="4.0" height="69.3" fill="#7766cf" stroke="#b3abd8" stroke-width="1"/>
<line x1="1033.5" y1="593.4" x2="1033.5" y2="602.8"/>
<rect x="1031.5" y="518.9" width="4.0" height="74.0" fill="#7766cf" stroke="#b3abd8" stroke-width="1"/>
<line x1="1038.5" y1="443.4" x2="1038.5" y2="457.4"/>
<rect x="1036.5" y="457.9" width="4.0" height="59.9" fill="#7766cf" stroke="#b3abd8" stroke-width="1"/>
<line x1="1044.5" y1="419.9" x2="1044.5" y2="438.7"/>
<line x1="1044.5" y1="452.8" x2="1044.5" y2="466.8"/>
<rect x="1042.5" y="439.2" width="4.0" height="13.1" fill="#7766cf" stroke="#b3abd8" stroke-width="1"/>
</g>
</svg>
<div class="t" style="left:219px;top:226.2px;height:24px;line-height:24px;font-size:12.7px;color:#cfcfcf;white-space:nowrap;letter-spacing:-0.25px;">15645.00</div>
<div class="t" style="left:219px;top:262.7px;height:24px;line-height:24px;font-size:12.7px;color:#cfcfcf;white-space:nowrap;letter-spacing:-0.25px;">15640.00</div>
<div class="t" style="left:219px;top:299.2px;height:24px;line-height:24px;font-size:12.7px;color:#cfcfcf;white-space:nowrap;letter-spacing:-0.25px;">15635.00</div>
<div class="t" style="left:219px;top:335.8px;height:24px;line-height:24px;font-size:12.7px;color:#cfcfcf;white-space:nowrap;letter-spacing:-0.25px;">15630.00</div>
<div class="t" style="left:219px;top:372.3px;height:24px;line-height:24px;font-size:12.7px;color:#cfcfcf;white-space:nowrap;letter-spacing:-0.25px;">15625.00</div>
<div class="t" style="left:219px;top:408.8px;height:24px;line-height:24px;font-size:12.7px;color:#cfcfcf;white-space:nowrap;letter-spacing:-0.25px;">15620.00</div>
<div class="t" style="left:219px;top:445.3px;height:24px;line-height:24px;font-size:12.7px;color:#cfcfcf;white-space:nowrap;letter-spacing:-0.25px;">15615.00</div>
<div class="t" style="left:219px;top:481.9px;height:24px;line-height:24px;font-size:12.7px;color:#cfcfcf;white-space:nowrap;letter-spacing:-0.25px;">15610.00</div>
<div class="t" style="left:219px;top:518.4px;height:24px;line-height:24px;font-size:12.7px;color:#cfcfcf;white-space:nowrap;letter-spacing:-0.25px;">15605.00</div>
<div class="t" style="left:219px;top:554.9px;height:24px;line-height:24px;font-size:12.7px;color:#cfcfcf;white-space:nowrap;letter-spacing:-0.25px;">15600.00</div>
<div class="t" style="left:219px;top:591.5px;height:24px;line-height:24px;font-size:12.7px;color:#cfcfcf;white-space:nowrap;letter-spacing:-0.25px;">15595.00</div>
<div class="t" style="left:219px;top:628.0px;height:24px;line-height:24px;font-size:12.7px;color:#cfcfcf;white-space:nowrap;letter-spacing:-0.25px;">15590.00</div>
<div class="t" style="left:219px;top:664.5px;height:24px;line-height:24px;font-size:12.7px;color:#cfcfcf;white-space:nowrap;letter-spacing:-0.25px;">15585.00</div>
<div class="t" style="left:219px;top:701.0px;height:24px;line-height:24px;font-size:12.7px;color:#cfcfcf;white-space:nowrap;letter-spacing:-0.25px;">15580.00</div>
<div class="t" style="left:219px;top:737.5px;height:24px;line-height:24px;font-size:12.7px;color:#cfcfcf;white-space:nowrap;letter-spacing:-0.25px;">15575.00</div>
<div class="t" style="left:219px;top:774.1px;height:24px;line-height:24px;font-size:12.7px;color:#cfcfcf;white-space:nowrap;letter-spacing:-0.25px;">15570.00</div>
<div class="t" style="left:219px;top:810.6px;height:24px;line-height:24px;font-size:12.7px;color:#cfcfcf;white-space:nowrap;letter-spacing:-0.25px;">15565.00</div>
<div class="t" style="left:219px;top:847.1px;height:24px;line-height:24px;font-size:12.7px;color:#cfcfcf;white-space:nowrap;letter-spacing:-0.25px;">15560.00</div>
<div class="t" style="left:219px;top:883.6px;height:24px;line-height:24px;font-size:12.7px;color:#cfcfcf;white-space:nowrap;letter-spacing:-0.25px;">15555.00</div>
<div class="t" style="left:219px;top:920.2px;height:24px;line-height:24px;font-size:12.7px;color:#cfcfcf;white-space:nowrap;letter-spacing:-0.25px;">15550.00</div>
<div class="t" style="left:-1px;top:953.4px;height:24px;line-height:24px;font-size:12.7px;color:#cfcfcf;white-space:nowrap;letter-spacing:-0.25px;">:40</div>
<div class="t" style="left:57px;top:953.4px;height:24px;line-height:24px;font-size:12.7px;color:#cfcfcf;white-space:nowrap;letter-spacing:-0.25px;">11:50</div>
<div class="t" style="left:126px;top:953.4px;height:24px;line-height:24px;font-size:12.7px;color:#cfcfcf;white-space:nowrap;letter-spacing:-0.25px;">12:00</div>
<svg style="left:200px;top:480px" width="80" height="36" viewBox="200 480 80 36"><path d="M203 497.5 L209.5 487.5 L277.5 487.5 L277.5 507.5 L209.5 507.5 Z" fill="#050505" stroke="#d6d6d6" stroke-width="1"/></svg>
<div class="t" style="left:219px;top:487.2px;height:24px;line-height:24px;font-size:12.7px;color:#ffffff;white-space:nowrap;letter-spacing:-0.25px;">15609.25</div>
<div class="t" style="left:1089px;top:236.0px;height:24px;line-height:24px;font-size:12.7px;color:#cfcfcf;white-space:nowrap;letter-spacing:-0.25px;">15620.00</div>
<div class="t" style="left:1089px;top:273.5px;height:24px;line-height:24px;font-size:12.7px;color:#cfcfcf;white-space:nowrap;letter-spacing:-0.25px;">15618.00</div>
<div class="t" style="left:1089px;top:311.0px;height:24px;line-height:24px;font-size:12.7px;color:#cfcfcf;white-space:nowrap;letter-spacing:-0.25px;">15616.00</div>
<div class="t" style="left:1089px;top:348.5px;height:24px;line-height:24px;font-size:12.7px;color:#cfcfcf;white-space:nowrap;letter-spacing:-0.25px;">15614.00</div>
<div class="t" style="left:1089px;top:386.0px;height:24px;line-height:24px;font-size:12.7px;color:#cfcfcf;white-space:nowrap;letter-spacing:-0.25px;">15612.00</div>
<div class="t" style="left:1089px;top:423.5px;height:24px;line-height:24px;font-size:12.7px;color:#cfcfcf;white-space:nowrap;letter-spacing:-0.25px;">15610.00</div>
<div class="t" style="left:1089px;top:461.0px;height:24px;line-height:24px;font-size:12.7px;color:#cfcfcf;white-space:nowrap;letter-spacing:-0.25px;">15608.00</div>
<div class="t" style="left:1089px;top:498.5px;height:24px;line-height:24px;font-size:12.7px;color:#cfcfcf;white-space:nowrap;letter-spacing:-0.25px;">15606.00</div>
<div class="t" style="left:1089px;top:536.0px;height:24px;line-height:24px;font-size:12.7px;color:#cfcfcf;white-space:nowrap;letter-spacing:-0.25px;">15604.00</div>
<div class="t" style="left:1089px;top:573.5px;height:24px;line-height:24px;font-size:12.7px;color:#cfcfcf;white-space:nowrap;letter-spacing:-0.25px;">15602.00</div>
<div class="t" style="left:1089px;top:611.0px;height:24px;line-height:24px;font-size:12.7px;color:#cfcfcf;white-space:nowrap;letter-spacing:-0.25px;">15600.00</div>
<div class="t" style="left:1089px;top:648.5px;height:24px;line-height:24px;font-size:12.7px;color:#cfcfcf;white-space:nowrap;letter-spacing:-0.25px;">15598.00</div>
<div class="t" style="left:1089px;top:686.0px;height:24px;line-height:24px;font-size:12.7px;color:#cfcfcf;white-space:nowrap;letter-spacing:-0.25px;">15596.00</div>
<div class="t" style="left:1089px;top:723.5px;height:24px;line-height:24px;font-size:12.7px;color:#cfcfcf;white-space:nowrap;letter-spacing:-0.25px;">15594.00</div>
<div class="t" style="left:1089px;top:761.0px;height:24px;line-height:24px;font-size:12.7px;color:#cfcfcf;white-space:nowrap;letter-spacing:-0.25px;">15592.00</div>
<div class="t" style="left:1089px;top:798.5px;height:24px;line-height:24px;font-size:12.7px;color:#cfcfcf;white-space:nowrap;letter-spacing:-0.25px;">15590.00</div>
<div class="t" style="left:1089px;top:836.0px;height:24px;line-height:24px;font-size:12.7px;color:#cfcfcf;white-space:nowrap;letter-spacing:-0.25px;">15588.00</div>
<div class="t" style="left:1089px;top:873.5px;height:24px;line-height:24px;font-size:12.7px;color:#cfcfcf;white-space:nowrap;letter-spacing:-0.25px;">15586.00</div>
<div class="t" style="left:1089px;top:911.0px;height:24px;line-height:24px;font-size:12.7px;color:#cfcfcf;white-space:nowrap;letter-spacing:-0.25px;">15584.00</div>
<div class="t" style="left:291.0px;top:964.2px;height:24px;line-height:24px;font-size:12.7px;color:#cfcfcf;white-space:nowrap;width:60px;text-align:center;letter-spacing:-0.25px;">11:52</div>
<div class="t" style="left:353.90999999999997px;top:964.2px;height:24px;line-height:24px;font-size:12.7px;color:#cfcfcf;white-space:nowrap;width:60px;text-align:center;letter-spacing:-0.25px;">11:53</div>
<div class="t" style="left:416.82px;top:964.2px;height:24px;line-height:24px;font-size:12.7px;color:#cfcfcf;white-space:nowrap;width:60px;text-align:center;letter-spacing:-0.25px;">11:54</div>
<div class="t" style="left:479.73px;top:964.2px;height:24px;line-height:24px;font-size:12.7px;color:#cfcfcf;white-space:nowrap;width:60px;text-align:center;letter-spacing:-0.25px;">11:55</div>
<div class="t" style="left:542.64px;top:964.2px;height:24px;line-height:24px;font-size:12.7px;color:#cfcfcf;white-space:nowrap;width:60px;text-align:center;letter-spacing:-0.25px;">11:56</div>
<div class="t" style="left:605.55px;top:964.2px;height:24px;line-height:24px;font-size:12.7px;color:#cfcfcf;white-space:nowrap;width:60px;text-align:center;letter-spacing:-0.25px;">11:57</div>
<div class="t" style="left:668.4599999999999px;top:964.2px;height:24px;line-height:24px;font-size:12.7px;color:#cfcfcf;white-space:nowrap;width:60px;text-align:center;letter-spacing:-0.25px;">11:58</div>
<div class="t" style="left:731.37px;top:964.2px;height:24px;line-height:24px;font-size:12.7px;color:#cfcfcf;white-space:nowrap;width:60px;text-align:center;letter-spacing:-0.25px;">11:59</div>
<div class="t" style="left:794.28px;top:964.2px;height:24px;line-height:24px;font-size:12.7px;color:#cfcfcf;white-space:nowrap;width:60px;text-align:center;letter-spacing:-0.25px;">12:00</div>
<div class="t" style="left:857.1899999999999px;top:964.2px;height:24px;line-height:24px;font-size:12.7px;color:#cfcfcf;white-space:nowrap;width:60px;text-align:center;letter-spacing:-0.25px;">12:01</div>
<div class="t" style="left:920.0999999999999px;top:964.2px;height:24px;line-height:24px;font-size:12.7px;color:#cfcfcf;white-space:nowrap;width:60px;text-align:center;letter-spacing:-0.25px;">12:02</div>
<div class="t" style="left:983.01px;top:964.2px;height:24px;line-height:24px;font-size:12.7px;color:#cfcfcf;white-space:nowrap;width:60px;text-align:center;letter-spacing:-0.25px;">12:03</div>
<div class="t" style="left:297px;top:927.8px;height:24px;line-height:24px;font-size:12.7px;color:#cfcfcf;white-space:nowrap;letter-spacing:0.03px;">© 2023 NinjaTrader, LLC</div>
<svg style="left:1068px;top:420px" width="82" height="36" viewBox="1068 420 82 36"><path d="M1073 438.5 L1079.5 428.5 L1147.5 428.5 L1147.5 448.5 L1079.5 448.5 Z" fill="#050505" stroke="#d6d6d6" stroke-width="1"/></svg>
<div class="t" style="left:1089px;top:428.2px;height:24px;line-height:24px;font-size:12.7px;color:#ffffff;white-space:nowrap;letter-spacing:-0.25px;">15609.75</div>
<div style="left:1148px;top:207px;width:230px;height:791px;background:#2d2d30;"></div>
<div style="left:1148.6px;top:216px;width:1px;height:782px;background:#3a3a3c;"></div>
<div style="left:1158px;top:216px;width:131px;height:34px;background:#2d2d30;border:1px solid #434346;box-sizing:border-box;"></div>
<div style="left:1297px;top:216px;width:131px;height:34px;background:#2d2d30;border:1px solid #434346;box-sizing:border-box;"></div>
<div class="t" style="left:1190.8px;top:221.0px;height:24px;line-height:24px;font-size:18.3px;color:#cfcfcf;white-space:nowrap;letter-spacing:0.05px;">Buy Mkt</div>
<div class="t" style="left:1329.7px;top:221.0px;height:24px;line-height:24px;font-size:18.3px;color:#cfcfcf;white-space:nowrap;">Sell Mkt</div>
<div style="left:1158px;top:258px;width:131px;height:34px;background:#2d2d30;border:1px solid #434346;box-sizing:border-box;"></div>
<div style="left:1297px;top:258px;width:131px;height:34px;background:#2d2d30;border:1px solid #434346;box-sizing:border-box;"></div>
<div class="t" style="left:1191.6px;top:263.0px;height:24px;line-height:24px;font-size:18.3px;color:#cfcfcf;white-space:nowrap;letter-spacing:-0.25px;">Buy Ask</div>
<div class="t" style="left:1330.3px;top:263.0px;height:24px;line-height:24px;font-size:18.3px;color:#cfcfcf;white-space:nowrap;">Sell Ask</div>
<div style="left:1158px;top:300px;width:131px;height:34px;background:#2d2d30;border:1px solid #434346;box-sizing:border-box;"></div>
<div style="left:1297px;top:300px;width:131px;height:34px;background:#2d2d30;border:1px solid #434346;box-sizing:border-box;"></div>
<div class="t" style="left:1192.3px;top:305.0px;height:24px;line-height:24px;font-size:18.3px;color:#cfcfcf;white-space:nowrap;letter-spacing:-0.2px;">Buy Bid</div>
<div class="t" style="left:1331.2px;top:305.0px;height:24px;line-height:24px;font-size:18.3px;color:#cfcfcf;white-space:nowrap;">Sell Bid</div>
<div style="left:1158px;top:341px;width:131px;height:34px;background:#2d2d30;border:1px solid #434346;box-sizing:border-box;"></div>
<div style="left:1297px;top:341px;width:131px;height:34px;background:#2d2d30;border:1px solid #434346;box-sizing:border-box;"></div>
<div class="t" style="left:1209.2px;top:346.0px;height:24px;line-height:24px;font-size:18.3px;color:#cfcfcf;white-space:nowrap;letter-spacing:-1.4px;">Rev</div>
<div class="t" style="left:1339.2px;top:346.0px;height:24px;line-height:24px;font-size:18.3px;color:#cfcfcf;white-space:nowrap;">Close</div>
<div style="left:1158px;top:383px;width:240px;height:69px;background:#1c1c1c;border:1px solid #434346;box-sizing:border-box;"></div>
<div style="left:1159px;top:417px;width:240px;height:1px;background:#434346;"></div>
<div style="left:1292px;top:384px;width:1px;height:33px;background:#434346;"></div>
<div class="t" style="left:1159px;top:388.0px;height:24px;line-height:24px;font-size:14.5px;color:#cfcfcf;white-space:nowrap;width:133px;text-align:center;">Flat</div>
<div class="t" style="left:1342px;top:388.5px;height:24px;line-height:24px;font-size:14.5px;color:#cfcfcf;white-space:nowrap;letter-spacing:-0.25px;">Entry</div>
<div class="t" style="left:1280.5px;top:422.5px;height:24px;line-height:24px;font-size:14.5px;color:#cfcfcf;white-space:nowrap;letter-spacing:-1.0px;">PnL</div>
<div class="t" style="left:1158.5px;top:465.0px;height:24px;line-height:24px;font-size:14.5px;color:#cfcfcf;white-space:nowrap;letter-spacing:0.1px;">Instrument</div>
<div class="t" style="left:1324.4px;top:465.0px;height:24px;line-height:24px;font-size:14.5px;color:#cfcfcf;white-space:nowrap;letter-spacing:-1.1px;">TIF</div>
<div style="left:1158px;top:494.5px;width:158px;height:25px;background:#a1a1a1;"></div>
<div class="t" style="left:1166.3px;top:495.2px;height:24px;line-height:24px;font-size:14.5px;color:#787878;white-space:nowrap;letter-spacing:-0.7px;">NQ SEP23</div>
<div style="left:1324px;top:494.5px;width:60px;height:25px;background:#3f3f45;"></div>
<div class="t" style="left:1332px;top:495.0px;height:24px;line-height:24px;font-size:13px;color:#cfcfcf;white-space:nowrap;letter-spacing:-0.6px;">GTC</div>
<div class="t" style="left:1158.3px;top:525.0px;height:24px;line-height:24px;font-size:14.5px;color:#cfcfcf;white-space:nowrap;letter-spacing:0.2px;">Account</div>
<div class="t" style="left:1324px;top:525.0px;height:24px;line-height:24px;font-size:14.5px;color:#cfcfcf;white-space:nowrap;">Order qty</div>
<div style="left:1158px;top:553px;width:158px;height:26px;background:#3f3f45;"></div>
<div class="t" style="left:1166.5px;top:553.8px;height:24px;line-height:24px;font-size:14.5px;color:#cfcfcf;white-space:nowrap;letter-spacing:-0.27px;">Sim101</div>
<div style="left:1324px;top:553px;width:60px;height:26px;background:#3f3f45;"></div>
<div class="t" style="left:1335px;top:553.5px;height:24px;line-height:24px;font-size:14.5px;color:#cfcfcf;white-space:nowrap;">1</div>
<div class="t" style="left:1158.3px;top:585.0px;height:24px;line-height:24px;font-size:14.5px;color:#cfcfcf;white-space:nowrap;letter-spacing:0.08px;">ATM Strategy</div>
<div style="left:1158px;top:615.4px;width:230px;height:25.6px;background:#3f3f45;"></div>
<div class="t" style="left:1202px;top:616.0px;height:24px;line-height:24px;font-size:15px;color:#cfcfcf;white-space:nowrap;">ProchargedMopar</div>
<div class="t" style="left:1158px;top:647.0px;height:24px;line-height:24px;font-size:14.5px;color:#cfcfcf;white-space:nowrap;">A:</div>
<div class="t" style="left:1180px;top:647.0px;height:24px;line-height:24px;font-size:14px;color:#cfcfcf;white-space:nowrap;">15609.50</div>
<div class="t" style="left:1307px;top:647.0px;height:24px;line-height:24px;font-size:14.5px;color:#cfcfcf;white-space:nowrap;">1</div>
<div class="t" style="left:1158px;top:674.0px;height:24px;line-height:24px;font-size:14.5px;color:#cfcfcf;white-space:nowrap;">B:</div>
<div class="t" style="left:1180px;top:674.0px;height:24px;line-height:24px;font-size:14px;color:#cfcfcf;white-space:nowrap;">15609.25</div>
<div class="t" style="left:1307px;top:674.0px;height:24px;line-height:24px;font-size:14.5px;color:#cfcfcf;white-space:nowrap;">1</div>
<svg style="left:1148px;top:480px" width="230" height="170" viewBox="1148 480 230 170" fill="none">
<path d="M1301 503 L1306 508.8 L1311 503" stroke="#7a7a7a" stroke-width="2.3"/>
<path d="M1301 562 L1306 567.8 L1311 562" stroke="#f2f2f2" stroke-width="2.4"/>
<g fill="#f0f0f0">
<circle cx="1173.8" cy="622.5" r="1.8"/>
<rect x="1172.7" y="625.6" width="2.5" height="10"/>
<rect x="1171.1" y="625.6" width="2" height="1.3"/>
<rect x="1170.7" y="634.6" width="6" height="1.4"/>
</g>
</svg>

<svg style="left:0;top:998px" width="1378" height="15" viewBox="0 998 1378 15" fill="none">
<defs><linearGradient id="tb" x1="0" y1="0" x2="1" y2="0"><stop offset="0" stop-color="#2e2c28"/><stop offset="0.25" stop-color="#2a2927"/><stop offset="0.5" stop-color="#1e2026"/><stop offset="0.7" stop-color="#202022"/><stop offset="1" stop-color="#222222"/></linearGradient></defs>
<rect x="0" y="998" width="1378" height="15" fill="url(#tb)"/>
<rect x="377" y="998" width="61" height="15" fill="#4e4e50"/>
<rect x="28.4" y="1009.7" width="12.6" height="8" stroke="#35b5e5" stroke-width="2"/>
<path d="M88.5 1013 L97 1008.5 L105.5 1013 Z" fill="#1f7fd8"/>
<circle cx="158.8" cy="1019" r="10.3" fill="#3a9ee0"/>
<rect x="205.7" y="1007.7" width="30.5" height="10" rx="2" fill="#e4ecf6"/>
<path d="M268 1013 V1011 H277 L282 1013 Z" fill="#f0a828"/>
<circle cx="344.7" cy="1021" r="13.3" fill="#e5453a"/>
<circle cx="406" cy="1018" r="10.4" fill="#d8481c"/>
<path d="M407 1013 C407.5 1010.5 410 1009 412.5 1009.5 L412.5 1013 Z" fill="#f4f0ec"/>
<path d="M456 1013 L481 1009.3 V1013" stroke="#b8d070" stroke-width="1.6"/>
<rect x="581.6" y="1008.8" width="7.6" height="5" fill="#10308a"/>
<rect x="598" y="1008.8" width="6.5" height="5" fill="#10308a"/>
<circle cx="1027.5" cy="1016" r="6.8" fill="#f0c020"/>
<circle cx="1036.2" cy="1014" r="6.2" fill="#e02424"/>
<rect x="1035" y="1010" width="2.4" height="3" fill="#fff"/>
</svg>

<div class="t" style="left:1303px;top:999.6px;height:24px;line-height:24px;font-size:14.6px;color:#ffffff;white-space:nowrap;">11:04 AM</div>
<svg style="left:0;top:0" width="1378" height="1013" viewBox="0 0 1378 1013" fill="none" stroke="#f2641c" stroke-linecap="round" stroke-linejoin="round">
<!-- left arrowhead -->
<path d="M154.2 591.3 C146 594.5 137 598.5 130.7 603.1" stroke-width="3.4"/>
<path d="M130.7 603.1 C133 612 138 623 143.5 633.1" stroke-width="2.2"/>
<!-- long line -->
<path d="M132.6 603.1 C138 606.5 146 607.3 154.2 607 C160 606.5 165 605.6 169.9 605.7 C176 605.8 182 606.8 188.1 608 C203 610.5 218 613.8 232.6 616 C253 618 274 619.5 295 621 C312 622.8 329 624.8 345 626.7 C395 632 445 638 495 644.4 C530 649.5 565 656.5 600 662.5 C650 670 700 678 750 684 C765 686 780 687.5 795 689.3 C845 696 895 702 945 710.4 L958 713.3" stroke-width="2.6"/>
<!-- second hook -->
<path d="M229.7 594.3 C222 595 214 596 206.4 596.6 C198 597.3 189 598 180.3 598.5 C175 598.8 169 598.6 164.6 599.2 C160.5 600 159.4 602.5 158.8 605 C158 608 157.4 611 157.4 614.2 C157.6 619.5 158.5 625 159.4 629.9 C160.3 635 161.3 640 162.3 644.9" stroke-width="3"/>
<!-- small arrow near last candles -->
<path d="M1017.2 677.2 C1019.5 676.8 1022 676 1023.9 674.8 C1026.5 671 1028.3 666 1029.8 660.7 C1031.5 653 1033.3 646 1035.7 640 C1037.8 634.5 1040.5 630 1043.1 625.2 C1046 618 1048.6 609 1050.5 600 C1051.7 594 1052.7 588 1053.5 582.2 C1054.3 575 1055 567 1056.5 560 C1057.5 555.5 1058.2 552 1058.8 548.5 C1059.8 544 1061 539.5 1062.5 535.3" stroke-width="2.4"/>
<path d="M1047 550.7 C1052 545.5 1057 540 1062.5 535.3 C1067 541.5 1071 549.5 1073.6 558.1" stroke-width="2.4"/>
<!-- big arrow -->
<path d="M1057.4 486 C1066 476 1074 466 1082.5 455.7 C1090 447 1097.5 439 1104 429.6 C1110.5 418 1115 404 1119.4 390.4 C1125.5 374.5 1130.5 358.5 1135.7 342.6 C1141.5 324 1147 305 1153 286 C1157.5 270.5 1162.5 255 1167.6 240.1 C1171.3 230.3 1175.2 220.6 1179.1 211 C1183.7 199.5 1188.4 188 1193.2 176.7 C1196.7 168 1200.3 159.2 1203.9 150.5 C1206.8 143.8 1209.7 137 1212.6 130.3 C1215.2 123.7 1217.6 117 1220 110.2 C1223.2 101.5 1227.5 89.5 1231.3 77.4" stroke-width="2.4"/>
<path d="M1196.6 105.8 C1202 100.5 1207 96 1211.5 92 C1217 87 1222 82 1227 77.6 C1229 77 1230.5 77.2 1231.3 77.6 C1226 84 1221 89.5 1215.3 93.8 C1209 98.5 1203 102.5 1196.6 105.8 Z" fill="#f2641c" stroke-width="1.6"/>
<path d="M1231.3 77.4 C1232 84 1232.8 90.5 1233.8 96.8 C1234.7 103.5 1235.8 110 1237.1 115.9" stroke-width="2.4"/>
</svg>

</div></body></html>
